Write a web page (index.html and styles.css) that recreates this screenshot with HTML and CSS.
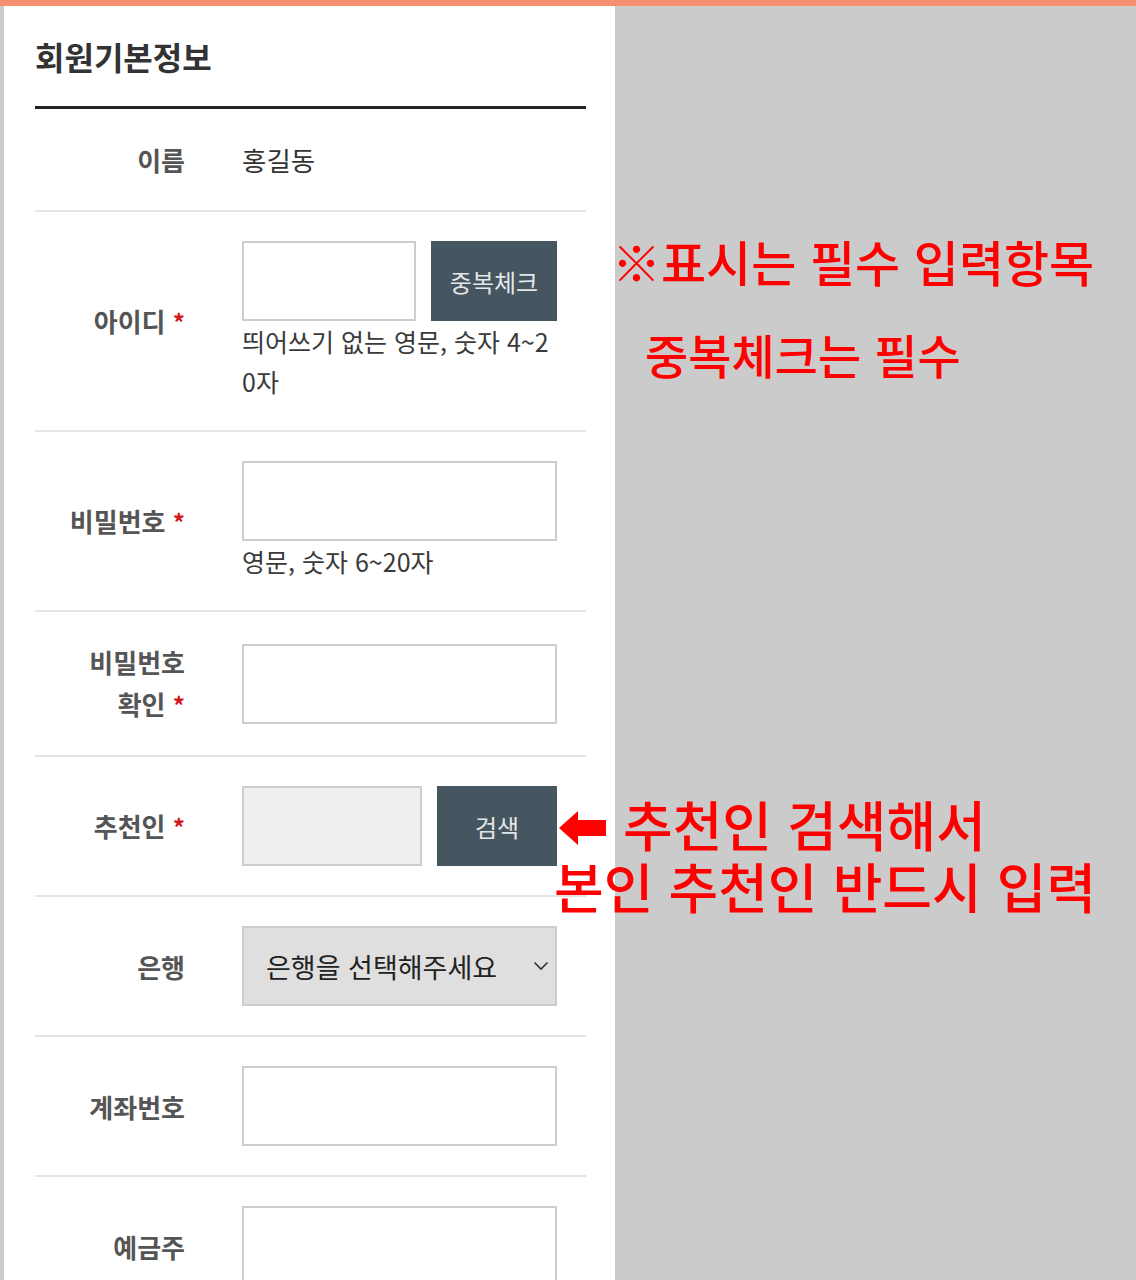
FILE: index.html
```html
<!DOCTYPE html>
<html lang="ko">
<head>
<meta charset="utf-8">
<title>회원기본정보</title>
<link rel="stylesheet" href="styles.css">
</head>
<body>
<div class="screen">
  <div class="topbar"></div>
  <div class="page">
    <div class="panel">
      <h2 class="title">회원기본정보</h2>
      <div class="form">
        <div class="row row-name">
          <div class="label">이름</div>
          <div class="field"><span class="value">홍길동</span></div>
        </div>
        <div class="row">
          <div class="label">아이디 <span class="req">*</span></div>
          <div class="field">
            <div class="inline">
              <input class="inp id-inp" type="text">
              <button class="btn" type="button">중복체크</button>
            </div>
            <p class="help">띄어쓰기 없는 영문, 숫자 4~20자</p>
          </div>
        </div>
        <div class="row">
          <div class="label">비밀번호 <span class="req">*</span></div>
          <div class="field">
            <input class="inp" type="password">
            <p class="help">영문, 숫자 6~20자</p>
          </div>
        </div>
        <div class="row">
          <div class="label label-2">비밀번호<br>확인 <span class="req">*</span></div>
          <div class="field"><input class="inp" type="password"></div>
        </div>
        <div class="row">
          <div class="label">추천인 <span class="req">*</span></div>
          <div class="field">
            <div class="inline">
              <input class="inp rec-inp" type="text" readonly>
              <button class="btn" type="button">검색</button>
            </div>
          </div>
        </div>
        <div class="row">
          <div class="label">은행</div>
          <div class="field">
            <div class="select">
              <span>은행을 선택해주세요</span>
              <svg class="chev" width="16" height="10" viewBox="0 0 16 10"><path d="M1.5 1.5 L8 8 L14.5 1.5" fill="none" stroke="#333" stroke-width="1.6"/></svg>
            </div>
          </div>
        </div>
        <div class="row">
          <div class="label">계좌번호</div>
          <div class="field"><input class="inp" type="text"></div>
        </div>
        <div class="row">
          <div class="label">예금주</div>
          <div class="field"><input class="inp" type="text"></div>
        </div>
      </div>
    </div>
  </div>

  <div class="note n1"><b class="mark">※</b>표시는 필수 입력항목</div>
  <div class="note n2">중복체크는 필수</div>
  <svg class="arrow" width="50" height="40" viewBox="0 0 50 40"><path d="M1 20 L20 3 L20 12 L48 12 L48 28 L20 28 L20 37 Z" fill="#ff0000"/></svg>
  <div class="note n34">추천인 검색해서<br>본인 추천인 반드시 입력</div>
</div>
</body>
</html>
```
FILE: styles.css
```css
* { box-sizing: border-box; }
html, body { margin: 0; padding: 0; }
body {
  background: #cbcbcb;
  font-family: "Noto Sans CJK KR", "Noto Sans", sans-serif;
  height: 1280px;
  overflow: hidden;
}
.screen { position: relative; height: 1280px; }
.topbar { height: 6px; background: #f58f6f; }
.page { padding-left: 4px; height: 1274px; }
.panel {
  width: 611px;
  height: 100%;
  background: #fff;
  padding: 0 29px 0 31px;
}
.title {
  margin: 0;
  padding: 30px 0 30px;
  line-height: 40px;
  font-size: 32px;
  font-weight: 700;
  color: #333;
  border-bottom: 3px solid #222;
}
.row {
  display: grid;
  grid-template-columns: 150px 315px;
  column-gap: 57px;
  align-items: center;
  padding: 29px 0;
  border-bottom: 2px solid #e4e4e4;
}
.label {
  text-align: right;
  font-size: 26px;
  line-height: 43px;
  font-weight: 700;
  color: #555;
}
.label-2 { line-height: 42px; }
.req { color: #d4161b; font-size: 24px; }
.value { font-size: 26.5px; line-height: 43px; color: #333; }
.field { display: flex; flex-direction: column; }
.inline { display: flex; gap: 15px; }
.inp {
  display: block;
  width: 100%;
  height: 80px;
  margin: 0;
  padding: 0 10px;
  border: 2px solid #cdcdcd;
  background: #fff;
  font-size: 24px;
  outline: none;
}
.id-inp { width: 174px; flex: none; }
.rec-inp { width: 180px; flex: none; background: #efefef; }
.btn {
  flex: 1;
  height: 80px;
  margin: 0;
  border: 0;
  background: #465660;
  color: #e4e6e8;
  font-family: inherit;
  font-size: 24px;
}
.help {
  margin: 0;
  font-size: 25px;
  line-height: 40px;
  color: #3a3a3a;
  word-break: break-all;
}
.select {
  display: flex;
  align-items: center;
  justify-content: space-between;
  height: 80px;
  padding: 0 6px 0 22px;
  border: 2px solid #cdcdcd;
  background: #dfdfdf;
  font-size: 27px;
  color: #222;
}
.note {
  position: absolute;
  color: #ff0000;
  font-weight: 500;
  line-height: 1;
  white-space: nowrap;
}
.mark { font-weight: 700; }
.n1 { left: 612px; top: 236px; font-size: 49px; }
.n2 { left: 645px; top: 330px; font-size: 47px; }
.n34 {
  left: 554px;
  top: 793px;
  font-size: 54px;
  line-height: 62px;
  text-indent: 69px;
}
.arrow { position: absolute; left: 558px; top: 808px; }
```
